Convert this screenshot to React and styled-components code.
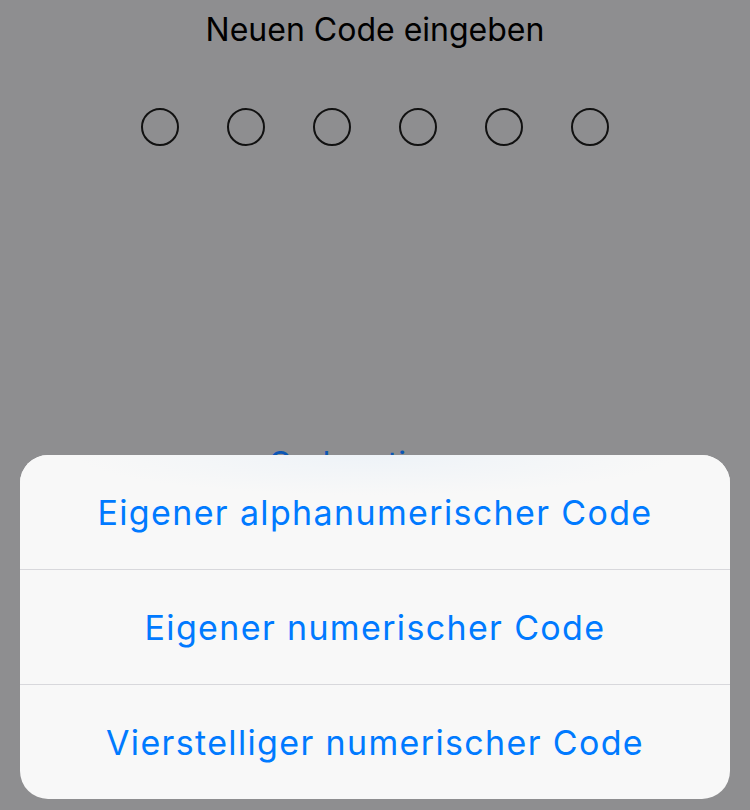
import React from 'react'
import styled, { createGlobalStyle } from 'styled-components'

const GlobalStyle = createGlobalStyle`
  html, body {
    margin: 0;
    padding: 0;
    background: #8e8e90;
    font-family: Inter, Roboto, "Liberation Sans", sans-serif;
  }
`

const Screen = styled.div`
  position: relative;
  width: 750px;
  height: 810px;
  overflow: hidden;
  background: #8e8e90;
  display: flex;
  flex-direction: column;
  align-items: center;
`

const Title = styled.div`
  margin-top: 10px;
  font-size: 32px;
  line-height: 40px;
  color: #000;
`

const Dots = styled.div`
  margin-top: 58px;
  display: flex;
  gap: 48px;
`

const Dot = styled.span`
  width: 34px;
  height: 34px;
  border-radius: 50%;
  border: 2px solid #111;
`

const OptionsLink = styled.div`
  margin-top: auto;
  margin-bottom: 326px;
  font-size: 32px;
  line-height: 40px;
  color: #0b56b5;
`

const Sheet = styled.div`
  position: absolute;
  left: 20px;
  right: 20px;
  bottom: 11px;
  border-radius: 28px;
  overflow: hidden;
  background: #f8f8f8;
  display: flex;
  flex-direction: column;
`

const Action = styled.button`
  box-sizing: content-box;
  height: 114px;
  border: 0;
  border-top: ${(p) => (p.first ? '0' : '1px solid #d8d8dc')};
  background: ${(p) =>
    p.first
      ? 'radial-gradient(ellipse 300px 40px at 50% 0%, #eef3f8 0%, #f8f8f8 100%)'
      : 'transparent'};
  font-family: inherit;
  font-size: 34px;
  letter-spacing: 1.35px;
  color: #007aff;
  padding: 0;
`

const options = [
  'Eigener alphanumerischer Code',
  'Eigener numerischer Code',
  'Vierstelliger numerischer Code',
]

export default function App() {
  return (
    <Screen>
      <GlobalStyle />
      <Title>Neuen Code eingeben</Title>
      <Dots>
        {Array.from({ length: 6 }).map((_, i) => (
          <Dot key={i} />
        ))}
      </Dots>
      <OptionsLink>Codeoptionen</OptionsLink>
      <Sheet>
        {options.map((label, i) => (
          <Action key={label} first={i === 0}>
            {label}
          </Action>
        ))}
      </Sheet>
    </Screen>
  )
}
